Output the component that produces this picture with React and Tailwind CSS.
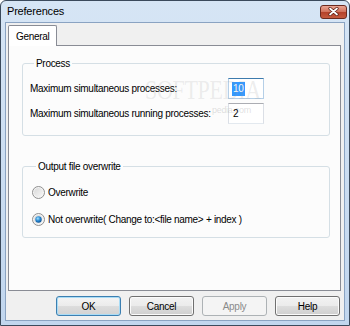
import React from "react";

function Radio({ checked }) {
    return (
        <svg width="13" height="13" viewBox="0 0 13 13" className="shrink-0">
            <defs>
                <linearGradient id={checked ? "rg1" : "rg0"} x1="0" y1="0" x2="1" y2="1">
                    <stop offset="0" stopColor="#d9d9d9" />
                    <stop offset="1" stopColor="#f7f7f7" />
                </linearGradient>
                <radialGradient id="dot" cx="0.4" cy="0.35" r="0.7">
                    <stop offset="0" stopColor="#a6e4ff" />
                    <stop offset="0.5" stopColor="#2a8ad4" />
                    <stop offset="1" stopColor="#0c4e8e" />
                </radialGradient>
            </defs>
            <circle cx="6.5" cy="6.5" r="6" fill="#f4f4f4" stroke="#8f8f8f" />
            <circle cx="6.5" cy="6.5" r="4.5" fill={checked ? "url(#rg1)" : "url(#rg0)"} />
            {checked && <circle cx="6.5" cy="6.5" r="3.2" fill="url(#dot)" />}
        </svg>
    );
}

function Btn({ label, primary, disabled }) {
    let cls = "w-[65px] h-[20px] rounded-[3px] border flex items-center justify-center ";
    if (disabled) {
        cls += "border-[#adb2b5] bg-[#f4f4f4] text-[#8a8a8a]";
    } else if (primary) {
        cls += "border-[#3c7fb1] shadow-[inset_0_0_0_1px_#a9dcf6] bg-[linear-gradient(#f4f4f4,#ebebeb_50%,#dddddd_50%,#d2d2d2)]";
    } else {
        cls += "border-[#707070] shadow-[inset_0_0_0_1px_#fbfbfb] bg-[linear-gradient(#f2f2f2,#ebebeb_50%,#dddddd_50%,#cfcfcf)]";
    }
    return <div className={cls}>{label}</div>;
}

export default function App() {
    return (
        <div className="w-[350px] h-[326px] flex flex-col border border-[#3b4a5c] rounded-t-[6px] bg-[linear-gradient(#d6e5f5,#c1d6ee)] font-['Liberation_Sans',sans-serif] text-[10px] tracking-[-0.3px] text-black">
            {/* title bar */}
            <div className="h-[21px] flex items-center justify-between pl-[6px] pr-[2px]">
                <span className="text-[11px] tracking-[-0.2px]">Preferences</span>
                <div className="w-[27px] h-[14px] rounded-[3px] border border-[#6b2a1f] bg-[linear-gradient(#eaa594,#d0705a_50%,#b4412a_50%,#c55a3e)] flex items-center justify-center">
                    <svg width="11" height="9" viewBox="0 0 11 9">
                        <path d="M2 1.5 L9 7.5 M9 1.5 L2 7.5" stroke="#5a1c12" strokeWidth="3.2" strokeLinecap="round" />
                        <path d="M2 1.5 L9 7.5 M9 1.5 L2 7.5" stroke="#ffffff" strokeWidth="1.7" strokeLinecap="round" />
                    </svg>
                </div>
            </div>

            {/* client area */}
            <div className="flex-1 mx-[4px] mb-[4px] border border-[#8aa3c2] bg-[#f0f0f0] flex flex-col pt-[2px]">
                <div className="h-[20px] flex ml-[2px]">
                    <div className="w-[49px] h-[21px] border border-b-0 border-[#898c95] bg-white rounded-t-[2px] flex items-center pl-[7px] relative z-10">
                        General
                    </div>
                </div>

                <div className="relative h-[246px] ml-[2px] mr-[3px] border border-[#898c95] bg-[#fcfcfc] pt-[11px] pl-[13px] pr-[10px]">
                    <fieldset className="relative h-[79px] border border-[#d5dfe5] rounded-[3px] pl-[7px]">
                        <legend className="ml-[4px] px-[2px] leading-[13px]">Process</legend>
                        <div className="grid grid-cols-[198px_36px] gap-y-[4px] pt-[8px] items-center">
                            <span>Maximum simultaneous processes:</span>
                            <div className="h-[21px] bg-white border border-[#b5cfe7] border-t-[#3d7bad] flex items-center pl-[3px]">
                                <span className="bg-[#3399ff] text-white px-[1px] leading-[14px]">10</span>
                            </div>
                            <span>Maximum simultaneous running processes:</span>
                            <div className="h-[21px] bg-white border border-[#dbdfe6] border-t-[#abadb3] border-b-[#e3e9ef] flex items-center pl-[4px]">
                                2
                            </div>
                        </div>
                    </fieldset>

                    <fieldset className="mt-[24px] h-[78px] border border-[#d5dfe5] rounded-[3px] pl-[9px]">
                        <legend className="ml-[4px] px-[2px] leading-[13px]">Output file overwrite</legend>
                        <div className="flex flex-col gap-[12px] pt-[12px]">
                            <div className="flex items-center gap-[3px]">
                                <Radio />
                                <span>Overwrite</span>
                            </div>
                            <div className="flex items-center gap-[3px]">
                                <Radio checked />
                                <span>Not overwrite( Change to:&lt;file name&gt; + index )</span>
                            </div>
                        </div>
                    </fieldset>

                    {/* watermark laid over the dialog */}
                    <div className="absolute z-10 pointer-events-none left-[136px] top-[27px] scale-y-125 font-['Liberation_Serif',serif] text-[22px] text-[rgba(150,150,150,0.18)]">
                        SOFTPEDIA
                    </div>
                    <div className="absolute z-10 pointer-events-none left-[203px] top-[58px] text-[9px] text-[rgba(150,150,150,0.3)]">
                        pedia.com
                    </div>
                </div>

                <div className="flex justify-end gap-[8px] pt-[5px] mr-[4px]">
                    <Btn label="OK" primary />
                    <Btn label="Cancel" />
                    <Btn label="Apply" disabled />
                    <Btn label="Help" />
                </div>
            </div>
        </div>
    );
}
